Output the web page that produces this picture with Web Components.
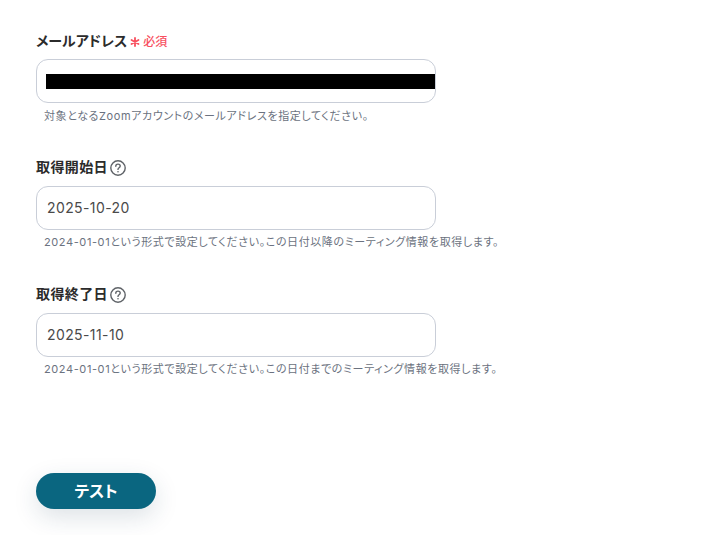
<!DOCTYPE html>
<html lang="ja">
<head>
<meta charset="utf-8">
<style>
  html, body { margin: 0; background: #fff; }
  body { font-family: Inter, "Noto Sans CJK JP", sans-serif; font-feature-settings: "palt"; }
</style>
</head>
<body>
<template id="help-tpl">
  <style>
    :host { display: inline-flex; width: 18px; height: 18px; }
    svg { display: block; }
  </style>
  <svg width="18" height="18" viewBox="0 0 18 18" fill="none" stroke="#5f6368">
    <circle cx="9" cy="9" r="7.2" stroke-width="1.4"/>
    <path d="M6.8 7.2c0-1.3.9-2.1 2.2-2.1s2.2.8 2.2 2c0 1.7-2.2 1.6-2.2 3.3" stroke-width="1.4" stroke-linecap="round"/>
    <circle cx="9" cy="12.8" r=".8" fill="#5f6368" stroke="none"/>
  </svg>
</template>

<script>
class HelpIcon extends HTMLElement {
  constructor() {
    super();
    this.attachShadow({ mode: 'open' });
    this.shadowRoot.appendChild(document.getElementById('help-tpl').content.cloneNode(true));
  }
}

class FormField extends HTMLElement {
  constructor() {
    super();
    this.attachShadow({ mode: 'open' });
  }

  connectedCallback() {
    const label = this.getAttribute('label');
    const required = this.hasAttribute('required');
    const hint = this.getAttribute('hint');
    const value = this.getAttribute('value');

    this.shadowRoot.innerHTML = `
      <style>
        :host { display: block; width: 600px; }
        .label {
          display: flex; align-items: center; height: 20px;
          font-size: 14px; font-weight: 700; color: #2b2b2b; line-height: 20px;
        }
        .label.with-help { margin-top: -1px; height: 18px; padding-bottom: 2px; letter-spacing: .4px; }
        .req { display: flex; align-items: center; margin: 1px 0 0 3px; color: #f8505f; font-size: 12px; font-weight: 500; letter-spacing: 0; }
        .req svg { margin-right: 3px; }
        help-icon { margin-left: 1px; margin-top: 1px; }
        .box {
          box-sizing: border-box; width: 400px; height: 44px; margin-top: 8px;
          border: 1px solid #c9ced8; border-radius: 12px; background: #fff;
          display: flex; align-items: center; padding: 0 9px;
          font-size: 14px; letter-spacing: .4px; color: #4a4a4a;
        }
        .box.filled { padding: 0 10px 2px; }
        .mask { flex: none; width: 388.5px; height: 14.5px; margin-top: .5px; background: #000; }
        .hint {
          margin: 5px 0 0 8px; font-size: 11px; line-height: 16px; letter-spacing: .6px;
          color: #6b7280; white-space: nowrap;
        }
        .box.filled + .hint { margin-top: 4px; margin-bottom: 1px; }
      </style>
      <div class="label${required ? '' : ' with-help'}">
        <span>${label}</span>
        ${required
          ? `<span class="req"><svg width="10" height="10" viewBox="0 0 10 10" stroke="#f8505f" stroke-width="1.8" stroke-linecap="round"><path d="M5 1v8M1.5 3l7 4M8.5 3l-7 4"/></svg>必須</span>`
          : `<help-icon></help-icon>`}
      </div>
      <div class="box${value ? ' filled' : ''}">${value ? `<span>${value}</span>` : `<div class="mask"></div>`}</div>
      <div class="hint">${hint}</div>
    `;
  }
}

class TestButton extends HTMLElement {
  constructor() {
    super();
    this.attachShadow({ mode: 'open' });
    this.shadowRoot.innerHTML = `
      <style>
        :host {
          display: flex; align-items: center; justify-content: center;
          box-sizing: border-box; width: 120px; height: 36px; padding-bottom: 2px; border-radius: 18px;
          background: #0a6680; color: #fff;
          font-size: 16px; font-weight: 700;
          box-shadow: 0 8px 24px rgba(30, 60, 90, .15);
        }
      </style>
      <slot></slot>
    `;
  }
}

class SettingsForm extends HTMLElement {
  constructor() {
    super();
    this.attachShadow({ mode: 'open' });
    this.shadowRoot.innerHTML = `
      <style>
        :host { display: flex; flex-direction: column; height: 535px; box-sizing: border-box; padding: 31px 0 0 36px; }
        .fields { display: flex; flex-direction: column; gap: 35px; }
        .actions { margin-top: 95px; }
      </style>
      <div class="fields"><slot name="field"></slot></div>
      <div class="actions"><slot name="action"></slot></div>
    `;
  }
}

customElements.define('help-icon', HelpIcon);
customElements.define('form-field', FormField);
customElements.define('test-button', TestButton);
customElements.define('settings-form', SettingsForm);
</script>

<settings-form>
  <form-field slot="field" label="メールアドレス" required hint="対象となるZoomアカウントのメールアドレスを指定してください。"></form-field>
  <form-field slot="field" label="取得開始日" value="2025-10-20" hint="2024-01-01という形式で設定してください。この日付以降のミーティング情報を取得します。"></form-field>
  <form-field slot="field" label="取得終了日" value="2025-11-10" hint="2024-01-01という形式で設定してください。この日付までのミーティング情報を取得します。"></form-field>
  <test-button slot="action">テスト</test-button>
</settings-form>
</body>
</html>
